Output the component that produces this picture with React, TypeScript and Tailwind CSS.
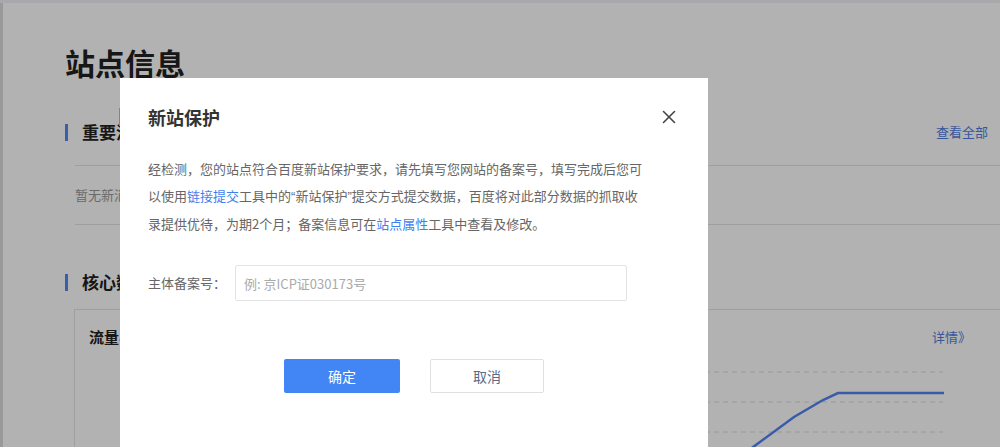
import { X } from "lucide-react";

const font = { fontFamily: '"Noto Sans CJK SC", "Noto Sans", sans-serif' };

function SectionHead({ title, extra }: { title: string; extra?: string }) {
  return (
    <div className="flex h-[34px] items-center justify-between pr-[12px]">
      <div className="flex items-center gap-[14px]">
        <span className="h-[17px] w-[3px] bg-[#4f88f6]" />
        <h2 className="text-[17px] font-bold text-[#222]">{title}</h2>
      </div>
      {extra && <a className="text-[13px] text-[#4f7de0]">{extra}</a>}
    </div>
  );
}

function Page() {
  return (
    <div className="flex h-full flex-col border-l-[3px] border-l-[#dcdcdc] pl-[62px] pt-[41px]">
      <h1 className="text-[30px] leading-[36px] font-bold text-[#222]">站点信息</h1>
      {/* 重要消息 */}
      <div className="mt-[35px]">
        <SectionHead title="重要消息" extra="查看全部" />
      </div>
      <div className="mt-[16px] ml-[10px] -mr-[20px] border-t border-[#e4e4e4]" />
      <p className="ml-[10px] py-[19px] text-[13px] leading-[20px] text-[#999]">暂无新消息</p>
      <div className="ml-[10px] -mr-[20px] border-t border-[#e4e4e4]" />
      {/* 核心数据 */}
      <div className="mt-[40px]">
        <SectionHead title="核心数据" />
      </div>
      <div className="mt-[10px] ml-[9px] -mr-[40px] flex-1 border-t border-l border-[#e4e4e4] pl-[14px] pt-[16px]">
        <div className="flex w-[882px] items-center justify-between">
          <h3 className="text-[15px] leading-[22px] font-bold text-[#222]">流量与关键词</h3>
          <a className="text-[13px] text-[#4f7de0]">详情》</a>
        </div>
        <svg width="880" height="100" viewBox="0 0 880 100" className="mt-[12px] block">
          {[12, 42, 72].map((y) => (
            <line key={y} x1="40" y1={y} x2="854" y2={y} stroke="#dcdcdc" strokeDasharray="5 4" />
          ))}
          <polyline
            points="660,90 705,57 734,40 749,33 855,33"
            fill="none"
            stroke="#5383ef"
            strokeWidth="2.5"
          />
        </svg>
      </div>
    </div>
  );
}

function Modal() {
  return (
    <div className="absolute top-[78px] left-[120px] h-[400px] w-[588px] bg-white pt-[27px] pr-[30px] pl-[28px]">
      <div className="flex items-center justify-between">
        <h3 className="text-[18px] leading-[24px] font-semibold text-[#333]">新站保护</h3>
        <X className="-mr-[2px] h-[22px] w-[22px] text-[#444]" strokeWidth={1.7} />
      </div>
      <p className="mt-[26px] text-[13px] leading-[27px] whitespace-nowrap text-[#666]">
        经检测，您的站点符合百度新站保护要求，请先填写您网站的备案号，填写完成后您可
        <br />
        以使用<a className="text-[#3f7ff0]">链接提交</a>工具中的<span className="font-['Liberation_Sans']">“</span>新站保护<span className="font-['Liberation_Sans']">”</span>提交方式提交数据，百度将对此部分数据的抓取收
        <br />
        录提供优待，为期2个月；备案信息可在<a className="text-[#3f7ff0]">站点属性</a>工具中查看及修改。
      </p>
      <div className="mt-[28px] flex items-center gap-[9px]">
        <label className="w-[78px] text-[13px] text-[#666]">主体备案号：</label>
        <input
          type="text"
          placeholder="例: 京ICP证030173号"
          className="h-[36px] w-[392px] rounded-[2px] border border-[#e3e3e3] px-[8px] text-[13px] text-[#333] outline-none placeholder:text-[#aaa]"
        />
      </div>
      <div className="mt-[58px] flex justify-center gap-[30px] pl-[2px]">
        <button className="h-[34px] w-[116px] rounded-[2px] bg-[#4285f4] text-[14px] text-white">确定</button>
        <button className="h-[34px] w-[114px] rounded-[2px] border border-[#e0e0e0] bg-white text-[14px] text-[#5a6a8a]">
          取消
        </button>
      </div>
    </div>
  );
}

export default function App() {
  return (
    <div className="relative h-[447px] w-[1000px] overflow-hidden bg-white" style={font}>
      <div className="h-[3px] bg-[#f0f2f6]" />
      <Page />
      {/* overlay */}
      <div className="absolute inset-0 bg-black/30" />
      <span className="absolute top-[108px] left-[119px] h-[18px] w-[3px] bg-[#4f88f6]" />
      <Modal />
    </div>
  );
}
